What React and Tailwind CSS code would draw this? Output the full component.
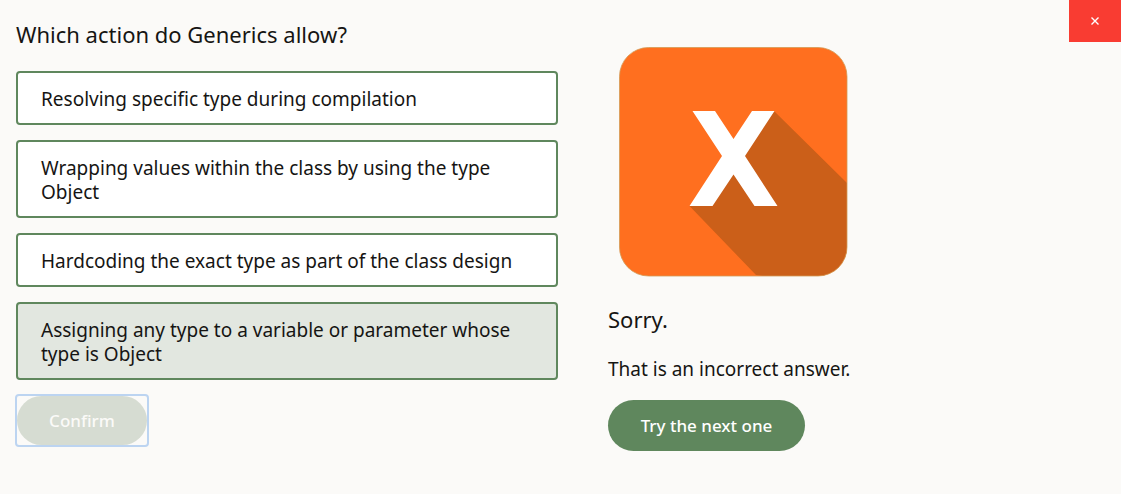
import { useState } from "react";

const answers = [
  "Resolving specific type during compilation",
  "Wrapping values within the class by using the type Object",
  "Hardcoding the exact type as part of the class design",
  "Assigning any type to a variable or parameter whose type is Object",
];

function WrongAnswerIcon() {
  return (
    <svg
      viewBox="0 0 229 230"
      className="ml-[11px] h-[230px] w-[229px]"
      role="img"
      aria-label="Incorrect"
    >
      <defs>
        <clipPath id="tile">
          <rect x="0.5" y="0.5" width="227.500" height="228.500" rx="29" />
        </clipPath>
      </defs>
      <rect x="0.5" y="0.5" width="227.500" height="228.500" rx="29" fill="#ff6f1f" />
      <path
        d="M155 64 L229 137 V230 H150 L137 228 L70.500 159 L114.500 125 L120 109 Z"
        fill="#cb5f19"
        clipPath="url(#tile)"
      />
      <path
        d="M73.500 64 H96 L114.500 92 L133 64 H155.500 L126 109 L158.500 159 H135.500 L114.500 127.500 L93.500 159 H70.500 L103 109 Z"
        fill="#ffffff"
      />
      <rect
        x="0.5"
        y="0.5"
        width="227.500"
        height="228.500"
        rx="29"
        fill="none"
        stroke="#d39a55"
        strokeWidth="0.8"
      />
    </svg>
  );
}

export default function App() {
  const [selected, setSelected] = useState(3);

  return (
    <div className="relative min-h-screen bg-[#fbfaf8] font-['Noto_Sans','Open_Sans',sans-serif] text-[#161513]">
      <button
        type="button"
        aria-label="Close"
        className="absolute right-0 top-0 flex h-[42px] w-[52px] items-center justify-center bg-[#f93c32] text-white"
      >
        <svg viewBox="0 0 8 8" className="h-2 w-2" aria-hidden="true">
          <path d="M0.500 0.500 L7.500 7.500 M7.500 0.500 L0.500 7.500" stroke="currentColor" strokeWidth="1.4" />
        </svg>
      </button>

      <main className="grid grid-cols-[542fr_497fr] gap-[50px] px-4">
        <section className="pt-5">
          <h1 className="text-[22px] leading-7">Which action do Generics allow?</h1>
          <div className="mt-[23px] flex flex-col gap-[15px]">
            {answers.map((answer, index) => (
              <button
                key={answer}
                type="button"
                aria-pressed={selected === index}
                onClick={() => setSelected(index)}
                className={
                  "rounded border-2 border-[#5f875d] px-[23px] pb-3 pt-[14px] text-left text-[19px] leading-6 " +
                  (selected === index ? "bg-[#e2e7e0]" : "bg-white")
                }
              >
                {answer}
              </button>
            ))}
          </div>
          <div className="mt-[14px] -ml-px inline-flex rounded border-2 border-[#bcd4f1]">
            <button
              type="button"
              disabled
              className="h-[49px] w-[130px] rounded-full bg-[#d6dcd2] text-[17px] font-medium text-[#fbfaf8]"
            >
              Confirm
            </button>
          </div>
        </section>

        <section className="pt-[47px]">
          <WrongAnswerIcon />
          <h2 className="mt-7 text-[22px] leading-7">Sorry.</h2>
          <p className="mt-6 text-[19px] leading-6">That is an incorrect answer.</p>
          <button
            type="button"
            className="mt-[19px] h-[51px] w-[197px] rounded-full bg-[#5f875d] text-[17px] font-medium text-white"
          >
            Try the next one
          </button>
        </section>
      </main>
    </div>
  );
}
